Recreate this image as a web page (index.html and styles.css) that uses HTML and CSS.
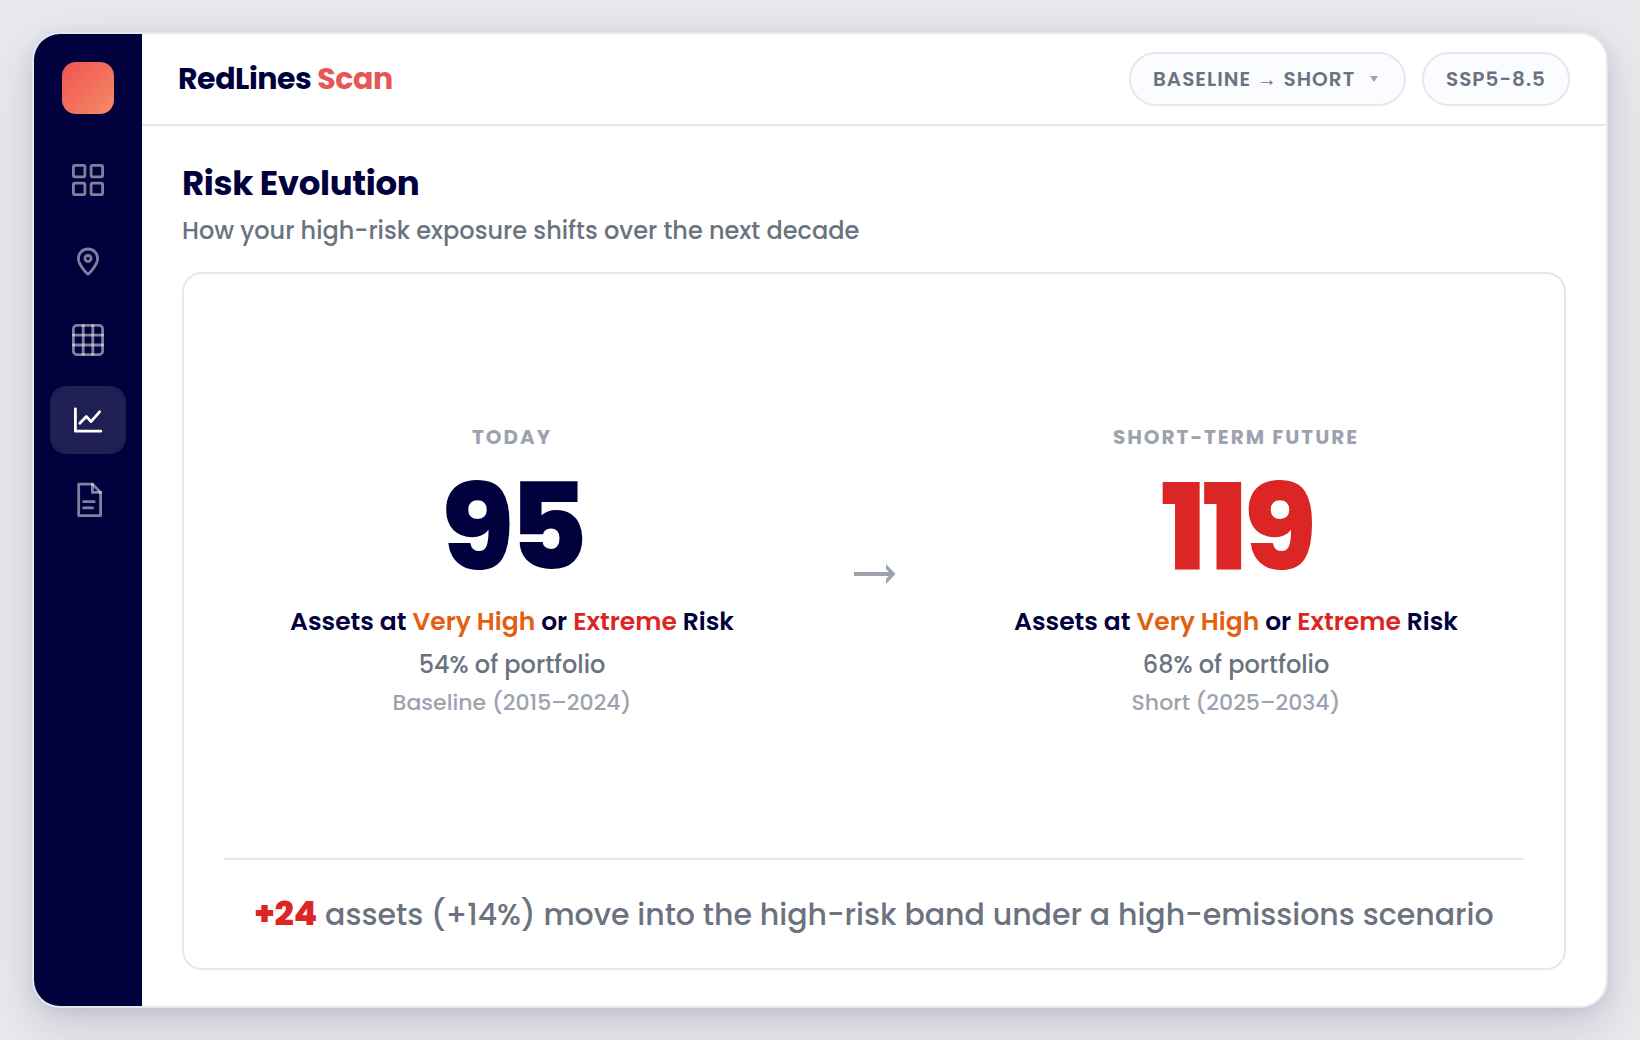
FILE: index.html
```html
<!DOCTYPE html>
<html lang="en">
<head>
    <meta charset="UTF-8">
    <meta name="viewport" content="width=device-width, initial-scale=1">
    <title>RedLines Scan - Risk Evolution</title>
    <link rel="stylesheet" href="styles.css">
</head>
<body>
    <div class="window">
        <nav class="sidebar" aria-label="Main">
            <div class="logo"></div>
            <a href="#dashboard" class="nav-item" aria-label="Dashboard">
                <svg viewBox="0 0 40 40">
                    <rect x="5.4" y="5.4" width="11.5" height="11.5" rx="1.7"/>
                    <rect x="23.1" y="5.4" width="11.5" height="11.5" rx="1.7"/>
                    <rect x="5.4" y="23.1" width="11.5" height="11.5" rx="1.7"/>
                    <rect x="23.1" y="23.1" width="11.5" height="11.5" rx="1.7"/>
                </svg>
            </a>
            <a href="#map" class="nav-item" aria-label="Map">
                <svg viewBox="0 0 40 40">
                    <path d="M20 34.2C20 34.2 10.4 25.6 10.4 18.6a9.6 9.6 0 0 1 19.2 0C29.6 25.6 20 34.2 20 34.2z"/>
                    <circle cx="20" cy="18.4" r="3.1"/>
                </svg>
            </a>
            <a href="#table" class="nav-item" aria-label="Table">
                <svg viewBox="0 0 40 40">
                    <rect x="5.4" y="5.4" width="29.2" height="29.2" rx="3.4"/>
                    <path d="M5.4 15.2h29.2"/>
                    <path d="M5.4 25h29.2"/>
                    <path d="M15.2 5.4v29.2"/>
                    <path d="M24.8 5.4v29.2"/>
                </svg>
            </a>
            <a href="#evolution" class="nav-item active" aria-label="Risk evolution" aria-current="page">
                <svg viewBox="0 0 40 40">
                    <path d="M7.4 8.8v22.4h25.4"/>
                    <path d="M11.8 23.2l6.6-6.8 4.6 5.2 8.6-9.8"/>
                </svg>
            </a>
            <a href="#reports" class="nav-item" aria-label="Reports">
                <svg viewBox="0 0 40 40">
                    <path d="M24.4 4.1H10.7v31.5h21.9V12.4z"/>
                    <path d="M24.4 4.1v8.3h8.2"/>
                    <path d="M15.6 21.7h10.6"/>
                    <path d="M15.6 27.9h9"/>
                </svg>
            </a>
        </nav>

        <div class="main">
            <header class="topbar">
                <div class="brand">RedLines <span>Scan</span></div>
                <div class="filters">
                    <label class="pill">
                        <select aria-label="Time horizon">
                            <option>BASELINE → SHORT</option>
                        </select>
                        <span class="caret"></span>
                    </label>
                    <button type="button" class="pill">SSP5-8.5</button>
                </div>
            </header>

            <main class="content">
                <h1>Risk Evolution</h1>
                <p class="subtitle">How your high-risk exposure shifts over the next decade</p>

                <section class="card">
                    <div class="compare">
                        <div class="period">
                            <div class="period-label">TODAY</div>
                            <div class="count">95</div>
                            <div class="assets">Assets at <span class="very-high">Very High</span> or <span class="extreme">Extreme</span> Risk</div>
                            <div class="share">54% of portfolio</div>
                            <div class="years">Baseline (2015–2024)</div>
                        </div>
                        <svg class="arrow" viewBox="0 0 52 24">
                            <path d="M6 12h38"/>
                            <path class="arrow-head" d="M38 2L47.5 12L38 22V17L42.5 12L38 7z"/>
                        </svg>
                        <div class="period">
                            <div class="period-label">SHORT-TERM FUTURE</div>
                            <div class="count future">119</div>
                            <div class="assets">Assets at <span class="very-high">Very High</span> or <span class="extreme">Extreme</span> Risk</div>
                            <div class="share">68% of portfolio</div>
                            <div class="years">Short (2025–2034)</div>
                        </div>
                    </div>
                    <p class="summary"><strong>+24</strong> assets (+14%) move into the high-risk band under a high-emissions scenario</p>
                </section>
            </main>
        </div>
    </div>
</body>
</html>
```
FILE: styles.css
```css
* { box-sizing: border-box; }
body { margin: 0; padding: 32px; min-height: 100vh; display: flex; background: #e8e9ec; color: #00003c; font-family: Poppins, "Liberation Sans", sans-serif; font-weight: 500; }
h1, p { margin: 0; }

.window { flex: 1; display: flex; overflow: hidden; background: white; border: 2px solid #e5e7eb; border-radius: 28px; box-shadow: 0 16px 48px rgba(0,0,80,0.14), 0 4px 16px rgba(0,0,80,0.08); }

/* Sidebar */
.sidebar { width: 108px; flex-shrink: 0; padding: 28px 16px; display: flex; flex-direction: column; align-items: center; gap: 12px; background: #00003c; }
.logo { width: 52px; height: 52px; margin-bottom: 20px; border-radius: 14px; background: linear-gradient(135deg, #ef5350, #f58b67); }
.nav-item { width: 76px; height: 68px; display: flex; align-items: center; justify-content: center; border-radius: 16px; color: rgba(255,255,255,0.5); }
.nav-item.active { background: rgba(255,255,255,0.12); color: white; }
.nav-item svg { width: 40px; height: 40px; fill: none; stroke: currentColor; stroke-width: 2.8; stroke-linecap: round; stroke-linejoin: round; }

/* Top bar */
.main { flex: 1; min-width: 0; display: flex; flex-direction: column; }
.topbar { height: 92px; padding: 0 36px; display: flex; align-items: center; justify-content: space-between; border-bottom: 2px solid #e5e7eb; }
.brand { font-size: 30px; font-weight: 700; letter-spacing: -0.015em; }
.brand span { color: #e85555; }
.filters { display: flex; gap: 16px; }
.pill { height: 54px; padding: 0 22px; display: flex; align-items: center; gap: 14px; border: 2px solid #e5e7eb; border-radius: 27px; background: #fafcff; color: #6b7280; font-family: inherit; font-size: 20px; font-weight: 600; letter-spacing: 0.05em; cursor: pointer; }
.pill select { appearance: none; padding: 0; border: none; background: none; color: inherit; font: inherit; letter-spacing: inherit; cursor: pointer; }
.caret { width: 8px; margin-right: 4px; border: 4px solid transparent; border-top: 6px solid #9ca3af; border-bottom: none; }

/* Content */
.content { flex: 1; padding: 36px 40px; display: flex; flex-direction: column; }
h1 { font-size: 34px; line-height: 42px; font-weight: 700; letter-spacing: -0.01em; }
.subtitle { margin: 9px 0 23px; font-size: 24px; line-height: 36px; color: #6b7280; }
.card { flex: 1; padding: 8px 40px 0; display: flex; flex-direction: column; border: 2px solid #e5e7eb; border-radius: 20px; }
.compare { flex: 1; display: grid; grid-template-columns: 1fr auto 1fr; align-items: center; gap: 48px; text-align: center; }
.period-label { font-size: 20px; line-height: 30px; font-weight: 700; letter-spacing: 0.1em; color: #9ca3af; }
.count { margin: 15px 0 17px; font-size: 120px; line-height: 120px; font-weight: 800; letter-spacing: -0.04em; }
.count.future { color: #dc2626; }
.assets { font-size: 25px; line-height: 36px; font-weight: 600; }
.very-high { color: #e2600f; }
.extreme { color: #dc2626; }
.share { margin-top: 7px; font-size: 24px; line-height: 36px; color: #6b7280; }
.years { margin-top: 4px; font-size: 22px; line-height: 32px; color: #9ca3af; }
.arrow { width: 52px; height: 24px; margin-top: 8px; fill: none; stroke: #9ca3af; stroke-width: 4; }
.arrow .arrow-head { fill: #9ca3af; stroke: none; }
.summary { padding: 31px 0; border-top: 2px solid #e5e7eb; text-align: center; font-size: 30px; line-height: 44px; color: #6b7280; }
.summary strong { font-size: 34px; font-weight: 800; color: #dc2626; }
```
